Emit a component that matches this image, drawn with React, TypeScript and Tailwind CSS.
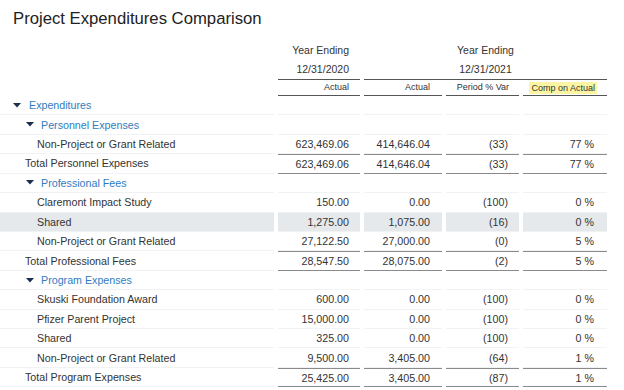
type Row = {
  label: string;
  kind: "group" | "sub" | "item" | "total";
  values?: [string, string, string, string];
  highlight?: boolean;
};

const rows: Row[] = [
  { label: "Expenditures", kind: "group" },
  { label: "Personnel Expenses", kind: "sub" },
  { label: "Non-Project or Grant Related", kind: "item", values: ["623,469.06", "414,646.04", "(33)", "77 %"] },
  { label: "Total Personnel Expenses", kind: "total", values: ["623,469.06", "414,646.04", "(33)", "77 %"] },
  { label: "Professional Fees", kind: "sub" },
  { label: "Claremont Impact Study", kind: "item", values: ["150.00", "0.00", "(100)", "0 %"] },
  { label: "Shared", kind: "item", values: ["1,275.00", "1,075.00", "(16)", "0 %"], highlight: true },
  { label: "Non-Project or Grant Related", kind: "item", values: ["27,122.50", "27,000.00", "(0)", "5 %"] },
  { label: "Total Professional Fees", kind: "total", values: ["28,547.50", "28,075.00", "(2)", "5 %"] },
  { label: "Program Expenses", kind: "sub" },
  { label: "Skuski Foundation Award", kind: "item", values: ["600.00", "0.00", "(100)", "0 %"] },
  { label: "Pfizer Parent Project", kind: "item", values: ["15,000.00", "0.00", "(100)", "0 %"] },
  { label: "Shared", kind: "item", values: ["325.00", "0.00", "(100)", "0 %"] },
  { label: "Non-Project or Grant Related", kind: "item", values: ["9,500.00", "3,405.00", "(64)", "1 %"] },
  { label: "Total Program Expenses", kind: "total", values: ["25,425.00", "3,405.00", "(87)", "1 %"] },
];

const padRight = ["pr-[11px]", "pr-[12px]", "pr-[11px]", "pr-[13px]"];

function Caret() {
  return (
    <svg width="8" height="5" viewBox="0 0 8 5" className="mr-[8px] shrink-0">
      <polygon points="0,0 8,0 4,4.5" fill="#1d2f4d" />
    </svg>
  );
}

function Label({ row }: { row: Row }) {
  if (row.kind === "group") {
    return (
      <div className="flex items-center pl-[13px] text-[#2f7cc0]">
        <Caret />
        {row.label}
      </div>
    );
  }
  if (row.kind === "sub") {
    return (
      <div className="flex items-center pl-[26px] text-[#2f7cc0]">
        <Caret />
        <span className="-ml-[1px]">{row.label}</span>
      </div>
    );
  }
  if (row.kind === "total") {
    return <div className="pl-[25px]">{row.label}</div>;
  }
  return <div className="pl-[37px]">{row.label}</div>;
}

export default function App() {
  return (
    <div className="h-[390px] w-[624px] overflow-hidden bg-white font-['Liberation_Sans',Arial,sans-serif] text-[#333]">
      <h1 className="h-[41px] pl-[13px] pt-[9px] text-[16.7px] leading-[19px] text-[#222]">
        Project Expenditures Comparison
      </h1>

      <div className="grid grid-cols-[274px_82px_78px_73px_84px] gap-x-1 text-[10.5px]">
        <div className="h-[20px]" />
        <div className="flex h-[20px] items-center justify-end pr-[11px]">Year Ending</div>
        <div className="col-span-3 flex h-[20px] items-center justify-center">Year Ending</div>

        <div className="h-[19px]" />
        <div className="flex h-[19px] items-center justify-end border-b border-[#555] pr-[11px]">
          12/31/2020
        </div>
        <div className="col-span-3 flex h-[19px] items-center justify-center border-b border-[#555]">
          12/31/2021
        </div>
      </div>

      <div className="grid grid-cols-[274px_82px_78px_73px_84px] gap-x-1 text-[9px]">
        <div className="h-[16px]" />
        <div className="flex h-[16px] items-center justify-end border-b border-[#555] pr-[11px]">Actual</div>
        <div className="flex h-[16px] items-center justify-end border-b border-[#555] pr-[12px]">Actual</div>
        <div className="flex h-[16px] items-center justify-end border-b border-[#555] pr-[10px]">
          Period % Var
        </div>
        <div className="flex h-[16px] items-center justify-end border-b border-[#555] pr-[10px]">
          <span className="bg-[#fbf5a3] px-[2px] leading-[12px]">Comp on Actual</span>
        </div>
      </div>

      <div className="text-[10.7px]">
        {rows.map((row, i) => (
          <div key={i} className="grid grid-cols-[274px_82px_78px_73px_84px] gap-x-1">
            <div
              className={`flex h-[19.43px] items-center border-b border-[#f1f2f3] ${
                row.highlight ? "bg-[#e5e9ec]" : ""
              }`}
            >
              <Label row={row} />
            </div>
            {[0, 1, 2, 3].map((c) => (
              <div
                key={c}
                className={`flex h-[19.43px] items-center justify-end ${padRight[c]} ${
                  row.kind === "total"
                    ? "border-y border-[#8a8a8a]"
                    : "border-b border-[#f1f2f3]"
                } ${row.highlight ? "bg-[#e5e9ec]" : ""}`}
              >
                {row.values ? row.values[c] : ""}
              </div>
            ))}
          </div>
        ))}
      </div>
    </div>
  );
}
